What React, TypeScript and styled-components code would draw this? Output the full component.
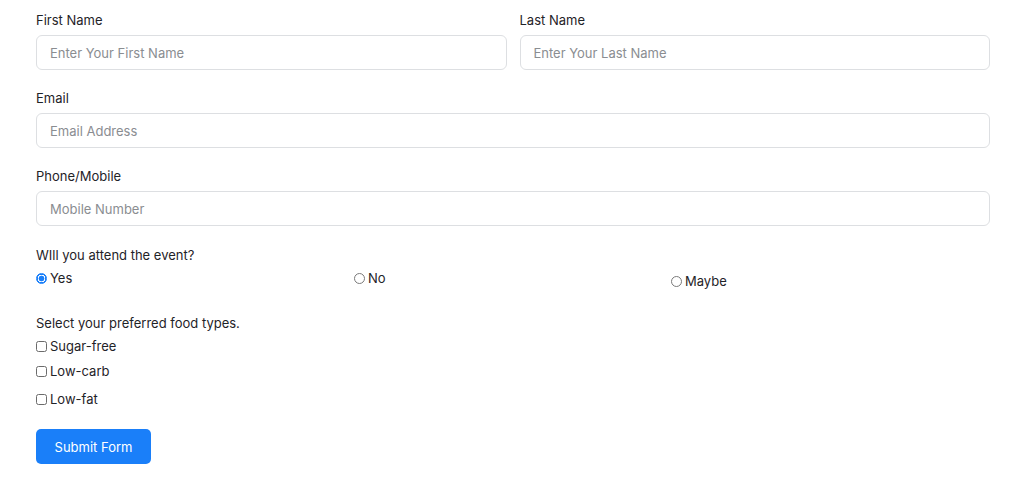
import React from "react";
import styled, { createGlobalStyle } from "styled-components";

const Global = createGlobalStyle`
  * { box-sizing: border-box; }
  html, body { margin: 0; padding: 0; background: #ffffff; }
  body { font-family: Inter, "Noto Sans", "Liberation Sans", sans-serif; color: #212529; }
`;

const Form = styled.form`
  width: 954px;
  margin-left: 36px;
  padding-top: 11px;
  display: flex;
  flex-direction: column;
`;

const Row = styled.div`
  display: grid;
  grid-template-columns: 1fr 1fr;
  column-gap: 13px;
`;

const Group = styled.div`
  display: flex;
  flex-direction: column;
  margin-bottom: 19px;
`;

const Label = styled.label`
  font-size: 13px;
  line-height: 18px;
  font-weight: 400;
  color: #1f2328;
  margin-bottom: 6px;
`;

const Input = styled.input`
  height: 35px;
  width: 100%;
  border: 1px solid #dddfe2;
  border-radius: 6px;
  padding: 0 13px;
  font-family: inherit;
  font-size: 13px;
  color: #212529;
  outline: none;
  &::placeholder { color: #8a8d91; }
`;

const Question = styled.div`
  font-size: 13px;
  line-height: 18px;
  font-weight: 400;
  color: #1f2328;
  margin-top: 1px;
  margin-bottom: 5px;
`;

const RadioRow = styled.div`
  display: grid;
  grid-template-columns: 318px 317px 1fr;
  margin-bottom: 23px;
`;

const Option = styled.label<{ $shift?: number }>`
  display: flex;
  align-items: center;
  gap: 3px;
  font-size: 13px;
  line-height: 18px;
  height: 18px;
  color: #1f2328;
  margin-top: ${(p) => p.$shift ?? 0}px;
`;

const RadioDot = styled.span<{ $checked?: boolean }>`
  width: 11px;
  height: 11px;
  border-radius: 50%;
  flex: none;
  border: 1px solid ${(p) => (p.$checked ? "#1a7ff9" : "#7a7a7a")};
  background: ${(p) =>
    p.$checked
      ? "radial-gradient(circle, #1a7ff9 0 2.6px, #ffffff 3.2px 3.6px, #1a7ff9 4px)"
      : "#ffffff"};
`;

const CheckBox = styled.span`
  width: 11px;
  height: 11px;
  border-radius: 2.5px;
  flex: none;
  border: 1px solid #6b6b6b;
  background: #fff;
`;

const CheckOption = styled(Option)<{ $gap?: number }>`
  margin-top: ${(p) => p.$gap ?? 0}px;
`;

const Button = styled.button`
  margin-top: 21px;
  width: 115px;
  height: 35px;
  border: none;
  border-radius: 5px;
  background: #1a7ff9;
  color: #ffffff;
  font-family: inherit;
  font-size: 13px;
  font-weight: 400;
  padding: 0;
  cursor: pointer;
`;

export default function App() {
  return (
    <>
      <Global />
      <Form onSubmit={(e) => e.preventDefault()}>
        <Row>
          <Group>
            <Label>First Name</Label>
            <Input placeholder="Enter Your First Name" />
          </Group>
          <Group>
            <Label>Last Name</Label>
            <Input placeholder="Enter Your Last Name" />
          </Group>
        </Row>
        <Group>
          <Label>Email</Label>
          <Input placeholder="Email Address" />
        </Group>
        <Group>
          <Label>Phone/Mobile</Label>
          <Input placeholder="Mobile Number" />
        </Group>
        <Question>WIll you attend the event?</Question>
        <RadioRow>
          <Option>
            <RadioDot $checked />
            Yes
          </Option>
          <Option>
            <RadioDot />
            No
          </Option>
          <Option $shift={3}>
            <RadioDot />
            Maybe
          </Option>
        </RadioRow>
        <Question>Select your preferred food types.</Question>
        <CheckOption $gap={0}>
          <CheckBox />
          Sugar-free
        </CheckOption>
        <CheckOption $gap={7}>
          <CheckBox />
          Low-carb
        </CheckOption>
        <CheckOption $gap={10}>
          <CheckBox />
          Low-fat
        </CheckOption>
        <div>
          <Button type="submit">Submit Form</Button>
        </div>
      </Form>
    </>
  );
}
